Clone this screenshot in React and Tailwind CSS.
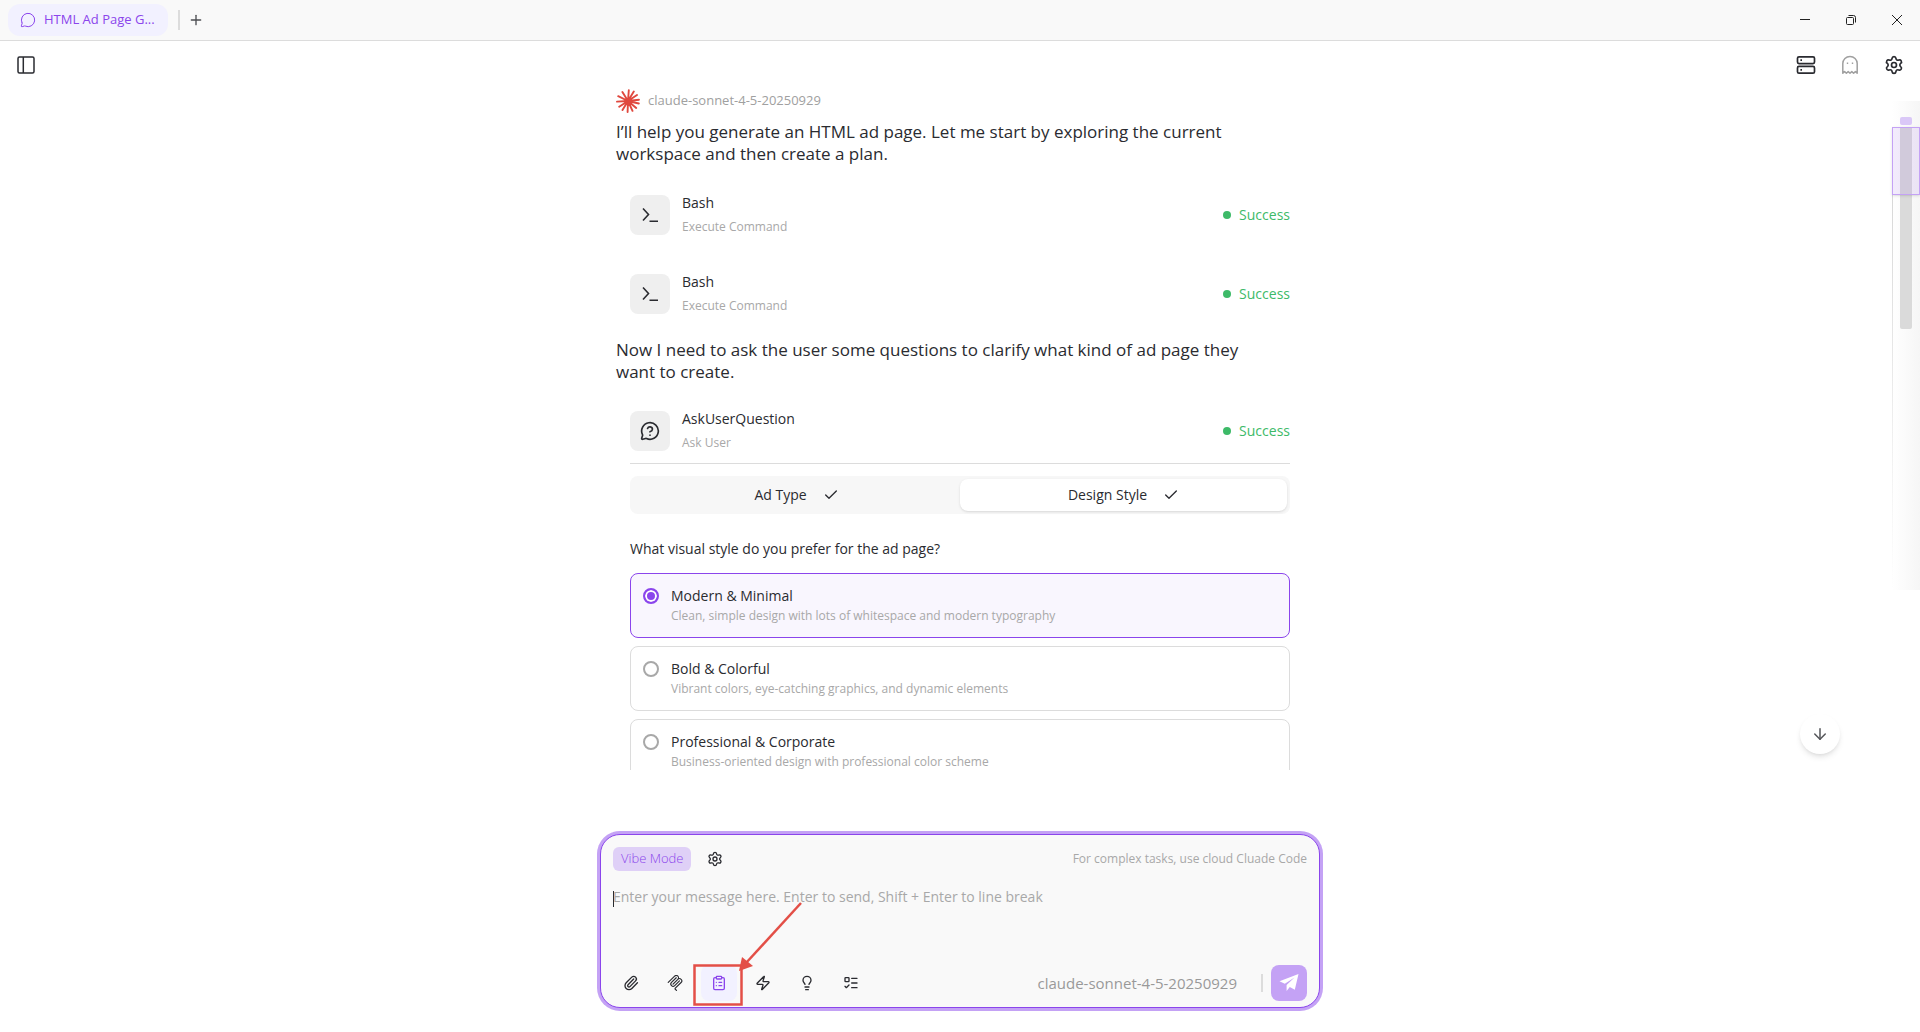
import React, { useState } from "react";
import {
  ArrowDown,
  Check,
  ClipboardList,
  Lightbulb,
  ListTodo,
  MessageCircle,
  MessageCircleQuestionMark,
  Paperclip,
  Plus,
  Settings,
  Zap,
} from "lucide-react";

const questionTabs = ["Ad Type", "Design Style"];

const styleOptions = [
  {
    name: "Modern & Minimal",
    detail: "Clean, simple design with lots of whitespace and modern typography",
  },
  {
    name: "Bold & Colorful",
    detail: "Vibrant colors, eye-catching graphics, and dynamic elements",
  },
  {
    name: "Professional & Corporate",
    detail: "Business-oriented design with professional color scheme",
  },
];

const PanelIcon = () => (
  <svg className="w-5 h-5" viewBox="0 0 20 20" fill="none" stroke="currentColor" strokeWidth="1.5">
    <rect x="2" y="2" width="16" height="16" rx="1.5" />
    <path d="M7.3 2v16" />
  </svg>
);

const ServerIcon = () => (
  <svg className="w-5 h-5" viewBox="0 0 20 20" fill="none" stroke="currentColor" strokeWidth="1.7">
    <rect x="1.5" y="1.8" width="17" height="6.8" rx="1.5" />
    <rect x="1.5" y="11.4" width="17" height="6.8" rx="1.5" />
    <path d="M4.4 5.2h1.6M4.4 14.8h1.6" />
  </svg>
);

const GhostIcon = () => (
  <svg
    className="w-5 h-5"
    viewBox="0 0 20 20"
    fill="none"
    stroke="currentColor"
    strokeWidth="1.5"
    strokeLinejoin="round"
  >
    <path d="M2.8 18.2V8.6a7.2 7.2 0 0 1 14.4 0v9.6l-1.8-1.6-1.8 1.6-1.8-1.6-1.8 1.6-1.8-1.6-1.8 1.6-1.8-1.6z" />
    <path d="M6.8 8.3h1.4M11.8 8.3h1.4" />
  </svg>
);

const PromptIcon = () => (
  <svg className="w-4 h-4" viewBox="0 0 16 16" fill="none" stroke="currentColor" strokeWidth="1.6">
    <path d="M1 1.5l5.5 6L1 13.5M7.5 14.2h8.5" />
  </svg>
);

const BurstLogo = () => (
  <svg
    className="w-6 h-6 text-[#e0483e]"
    viewBox="-12 -12 24 24"
    stroke="currentColor"
    strokeWidth="1.9"
    strokeLinecap="round"
  >
    <path d="M0 0L.8-10.8M0 0L5.8-9.4M0 0L9-6M0 0L11-1.2M0 0L10.8 2.5M0 0L8.2 7M0 0L4.5 9.8M0 0L-.4 11M0 0L-5.5 9M0 0L-8.8 5.8M0 0L-11 .6M0 0L-9.8-4.8M0 0L-5.6-9" />
  </svg>
);

const McpIcon = () => (
  <svg className="w-4 h-4" viewBox="0 0 24 24" fill="currentColor">
    <path d="M15.688 2.343a2.588 2.588 0 00-3.61 0l-9.626 9.44a.863.863 0 01-1.203 0 .823.823 0 010-1.18l9.626-9.44a4.313 4.313 0 016.016 0 4.116 4.116 0 011.204 3.54 4.3 4.3 0 013.609 1.18l.05.05a4.115 4.115 0 010 5.9l-8.706 8.537a.274.274 0 000 .393l1.788 1.754a.823.823 0 010 1.18.863.863 0 01-1.203 0l-1.788-1.753a1.92 1.92 0 010-2.754l8.706-8.538a2.47 2.47 0 000-3.54l-.05-.049a2.588 2.588 0 00-3.607-.003l-7.172 7.034-.002.002-.098.097a.863.863 0 01-1.204 0 .823.823 0 010-1.18l7.273-7.133a2.47 2.47 0 00-.003-3.537z" />
    <path d="M14.485 4.703a.823.823 0 000-1.18.863.863 0 00-1.204 0l-7.119 6.982a4.115 4.115 0 000 5.9 4.314 4.314 0 006.016 0l7.12-6.982a.823.823 0 000-1.18.863.863 0 00-1.204 0l-7.119 6.982a2.588 2.588 0 01-3.61 0 2.47 2.47 0 010-3.54l7.12-6.982z" />
  </svg>
);

const SendIcon = () => (
  <svg className="w-5 h-5" viewBox="0 0 20 20" fill="currentColor">
    <path d="M19.5 1L.5 8.2l5.3 2.6L15.5 4.5 7.6 12v6l3.2-4.1 5 2.8z" />
  </svg>
);

const TitleBar = () => (
  <div className="flex h-[41px] shrink-0 items-center justify-between border-b border-[#dcdcdc] bg-[#f9f9f9]">
    <div className="flex items-center pl-2">
      <button className="flex h-8 w-40 items-center gap-2 rounded-xl bg-[#f2f1ff] px-3 text-[#8b45ec]">
        <MessageCircle className="w-4 h-4" strokeWidth={1.5} />
        <span className="text-[13px]">HTML Ad Page G...</span>
      </button>
      <span className="ml-[10px] h-5 w-0.5 bg-[#dcdcdc]" />
      <button aria-label="New tab" className="ml-2 text-[#4c4d52]">
        <Plus className="w-4 h-4" strokeWidth={2} />
      </button>
    </div>
    <div className="flex items-center text-[#222]">
      <button aria-label="Minimize" className="flex w-[46px] justify-center">
        <svg className="w-[10px] h-[10px]" viewBox="0 0 10 10" stroke="currentColor">
          <path d="M0 4.5h10" />
        </svg>
      </button>
      <button aria-label="Restore" className="flex w-[46px] justify-center">
        <svg className="w-[10px] h-[10px]" viewBox="0 0 10 10" fill="none" stroke="currentColor">
          <rect x=".5" y="2.5" width="7" height="7" rx="1" />
          <path d="M2.5.5h5a2 2 0 012 2v5" />
        </svg>
      </button>
      <button aria-label="Close" className="flex w-[46px] justify-center">
        <svg className="w-[10px] h-[10px]" viewBox="0 0 10 10" stroke="currentColor">
          <path d="M0 0l10 10M10 0L0 10" />
        </svg>
      </button>
    </div>
  </div>
);

const ToolRow = ({ icon, name, detail }) => (
  <div className="flex h-10 items-center gap-3">
    <div className="flex h-10 w-10 shrink-0 items-center justify-center rounded-lg bg-[#efefef]">
      {icon}
    </div>
    <div className="flex-1">
      <p className="text-sm leading-6">{name}</p>
      <p className="text-xs leading-6 font-medium text-[#a8a8a8]">{detail}</p>
    </div>
    <div className="flex items-center gap-2 text-sm text-[#3dba68]">
      <span className="h-2 w-2 rounded-full bg-[#3dba68]" />
      Success
    </div>
  </div>
);

const StylePicker = () => {
  const [tab, setTab] = useState("Design Style");
  const [style, setStyle] = useState("Modern & Minimal");

  return (
    <div className="mt-3 border-t border-[#dcdcdc] pt-3">
      <div className="flex rounded-lg bg-[#f7f7f7] p-[3px]">
        {questionTabs.map((item) => (
          <button
            key={item}
            onClick={() => setTab(item)}
            className={`flex h-8 flex-1 items-center justify-center gap-4 rounded-lg text-sm ${
              tab === item ? "bg-white shadow-sm" : ""
            }`}
          >
            {item}
            <Check className="w-4 h-4" strokeWidth={2} />
          </button>
        ))}
      </div>
      <fieldset className="mt-[23px]">
        <legend className="text-sm leading-6">What visual style do you prefer for the ad page?</legend>
        <div className="mt-3 space-y-2">
          {styleOptions.map((option) => (
            <label
              key={option.name}
              className={`flex h-[65px] gap-3 rounded-lg border px-3 pt-3 ${
                style === option.name ? "border-[#8b45ec] bg-[#f9f6fe]" : "border-[#dcdcdc]"
              }`}
            >
              <input
                type="radio"
                name="style"
                checked={style === option.name}
                onChange={() => setStyle(option.name)}
                className="mt-0.5 h-4 w-4 shrink-0 appearance-none rounded-full border-2 border-[#a8a8a8] bg-white checked:border-[#8b45ec] checked:bg-[#8b45ec] checked:shadow-[inset_0_0_0_2px_white]"
              />
              <span>
                <span className="block text-sm leading-5">{option.name}</span>
                <span className="block text-xs leading-5 font-medium text-[#a8a8a8]">{option.detail}</span>
              </span>
            </label>
          ))}
        </div>
      </fieldset>
    </div>
  );
};

const MiniMap = () => (
  <div className="absolute top-[101px] right-0 h-[489px] w-7 bg-linear-to-r from-white to-[#f6f6f6] pt-4">
    <div className="absolute top-[94px] bottom-0 left-0 w-px bg-linear-to-b from-[#d8d8d8] to-transparent" />
    <div className="mx-auto h-2 w-3 rounded-xs bg-[#dac8f7]" />
    <div className="mx-auto mt-0.5 h-[202px] w-3 rounded-b-xs bg-[#dadada]" />
    <div className="absolute top-[26px] left-0 h-[68px] w-7 border border-[#c4a2f5] bg-[#8b45ec]/10 shadow-sm" />
  </div>
);

const toolButton = "flex h-9 w-9 items-center justify-center rounded-lg";

const Composer = () => (
  <div className="relative mx-auto flex h-[174px] w-[720px] max-w-full shrink-0 flex-col rounded-[20px] border border-[#8b45ec] bg-[#f9f9f9] px-3 pt-3 pb-1.5 ring-3 ring-[#c4a2f5]">
    <div className="flex items-center">
      <span className="flex h-6 items-center rounded-md bg-[#dfd0f7] px-2 text-[13px] font-light text-[#8b45ec]">
        Vibe Mode
      </span>
      <button aria-label="Mode settings" className="ml-4">
        <Settings className="w-4 h-4" strokeWidth={2} />
      </button>
      <span className="ml-auto text-xs font-medium text-[#a8a8a8]">
        For complex tasks, use cloud Cluade Code
      </span>
    </div>
    <div className="relative mt-4 flex flex-1">
      <textarea
        aria-label="Message"
        placeholder="Enter your message here. Enter to send, Shift + Enter to line break"
        className="w-full resize-none text-sm leading-5 outline-none placeholder:text-[#a8a8a8]"
      />
      {/* caret */}
      <span className="absolute top-1 left-0 h-4 w-px bg-[#2a2b30]" />
    </div>
    <div className="flex items-center gap-2">
      <button aria-label="Attach" className={toolButton}>
        <Paperclip className="w-4 h-4" strokeWidth={2} />
      </button>
      <button aria-label="MCP tools" className={toolButton}>
        <McpIcon />
      </button>
      <button aria-label="Plan" className={`${toolButton} bg-[#f2f1ff] text-[#8b45ec]`}>
        <ClipboardList className="w-4 h-4" strokeWidth={2} />
      </button>
      <button aria-label="Quick actions" className={toolButton}>
        <Zap className="w-4 h-4" strokeWidth={2} />
      </button>
      <button aria-label="Thinking" className={toolButton}>
        <Lightbulb className="w-4 h-4" strokeWidth={2} />
      </button>
      <button aria-label="Todo list" className={toolButton}>
        <ListTodo className="w-4 h-4" strokeWidth={2} />
      </button>
      <button className="ml-auto text-[15px] text-[#999]">claude-sonnet-4-5-20250929</button>
      <span className="ml-4 h-[18px] w-0.5 bg-[#dcdcdc]" />
      <button aria-label="Send" className={`${toolButton} bg-[#c4a2f5] text-white`}>
        <SendIcon />
      </button>
    </div>
    {/* callout around the plan button */}
    <svg
      className="pointer-events-none absolute bottom-0 left-[91px] h-28 w-28 text-[#e34f47]"
      viewBox="0 0 112 112"
      fill="none"
      stroke="currentColor"
      strokeWidth="2.5"
    >
      <rect x="2.5" y="70.5" width="47" height="39" />
      <path d="M109 8L54 68" />
      <path d="M47 76l3-14 11 9z" fill="currentColor" stroke="none" />
    </svg>
  </div>
);

export default function App() {
  return (
    <div className="relative flex h-screen flex-col bg-white font-['Open_Sans','Noto_Sans',sans-serif] text-[#2a2b30]">
      <TitleBar />
      <header className="flex h-12 shrink-0 items-center justify-between px-4">
        <button aria-label="Toggle sidebar">
          <PanelIcon />
        </button>
        <div className="flex items-center gap-6">
          <button aria-label="Servers">
            <ServerIcon />
          </button>
          <button aria-label="Private chat" className="text-[#a0a0a0]">
            <GhostIcon />
          </button>
          <button aria-label="Settings">
            <Settings className="w-5 h-5" strokeWidth={2} />
          </button>
        </div>
      </header>
      <main className="h-[681px] shrink-0 overflow-hidden">
        <div className="mx-auto w-[688px] max-w-full">
          <div className="flex h-6 items-center gap-2 text-[13px] text-[#a0a0a0]">
            <BurstLogo />
            claude-sonnet-4-5-20250929
          </div>
          <p className="mt-2 max-w-[640px] text-[17px] leading-[22px]">
            I’ll help you generate an HTML ad page. Let me start by exploring the current workspace and then
            create a plan.
          </p>
          <div className="mt-[30px] mb-[25px] ml-[14px] w-[660px] space-y-[39px]">
            <ToolRow icon={<PromptIcon />} name="Bash" detail="Execute Command" />
            <ToolRow icon={<PromptIcon />} name="Bash" detail="Execute Command" />
          </div>
          <p className="max-w-[640px] text-[17px] leading-[22px]">
            Now I need to ask the user some questions to clarify what kind of ad page they want to create.
          </p>
          <div className="mt-7 ml-[14px] w-[660px]">
            <ToolRow
              icon={<MessageCircleQuestionMark className="w-5 h-5" strokeWidth={2} />}
              name="AskUserQuestion"
              detail="Ask User"
            />
            <StylePicker />
          </div>
        </div>
      </main>
      <div className="mt-auto px-4 pb-6">
        <Composer />
      </div>
      <MiniMap />
      <button
        aria-label="Scroll to bottom"
        className="absolute right-20 bottom-[278px] flex h-10 w-10 items-center justify-center rounded-full bg-white text-[#55565a] shadow-md"
      >
        <ArrowDown className="w-[18px] h-[18px]" strokeWidth={2} />
      </button>
    </div>
  );
}
